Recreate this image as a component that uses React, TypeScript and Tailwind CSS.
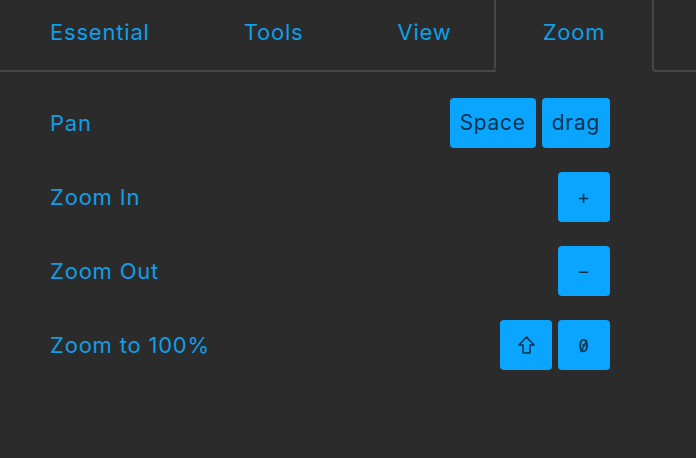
import React from "react";

const Key = ({ children, mono = false }: { children: React.ReactNode; mono?: boolean }) => (
  <div
    className={
      "h-[50px] min-w-[52px] px-[10px] rounded-[4px] bg-[#0aa5ff] text-[#0f3350] flex items-center justify-center " +
      (mono ? "text-[18px] font-['DejaVu_Sans_Mono',monospace]" : "text-[21px] tracking-[0.7px] font-['Inter',sans-serif]")
    }
  >
    {children}
  </div>
);

const ShiftIcon = () => (
  <svg width="19" height="20" viewBox="0 0 19 20" fill="none" stroke="#0f3350" strokeWidth="1.6" strokeLinejoin="round">
    <path d="M9.5 2 L17 10 L13 10 L13 18 L6 18 L6 10 L2 10 Z" />
  </svg>
);

const SlashedZero = () => (
  <span className="relative inline-block">
    0
    <svg className="absolute left-0 top-0 w-full h-full" viewBox="0 0 10 20" preserveAspectRatio="none">
      <line x1="7.6" y1="6" x2="2.4" y2="15" stroke="#0f3350" strokeWidth="1.2" />
    </svg>
  </span>
);

const rows: { label: string; keys: React.ReactNode }[] = [
  {
    label: "Pan",
    keys: (
      <>
        <Key>Space</Key>
        <Key>drag</Key>
      </>
    ),
  },
  { label: "Zoom In", keys: <Key mono>+</Key> },
  { label: "Zoom Out", keys: <Key mono>−</Key> },
  {
    label: "Zoom to 100%",
    keys: (
      <>
        <Key>
          <ShiftIcon />
        </Key>
        <Key mono>
          <SlashedZero />
        </Key>
      </>
    ),
  },
];

export default function App() {
  return (
    <div className="w-[696px] h-[458px] bg-[#2b2b2b] overflow-hidden font-['Inter',sans-serif] text-[#0f9ee8] tracking-[0.8px]">
      <div className="flex h-[72px]">
        <div className="flex border-b-2 border-[#474747]">
          <div className="pl-[50px] pr-[47px] pt-[16px] text-[22px]">Essential</div>
          <div className="px-[47px] pt-[16px] text-[22px]">Tools</div>
          <div className="pl-[47px] pr-[42px] pt-[16px] text-[22px] border-r-2 border-[#474747] rounded-br-[4px]">View</div>
        </div>
        <div className="px-[47px] pt-[16px] text-[22px]">Zoom</div>
        <div className="flex-1 border-b-2 border-l-2 border-[#474747] rounded-bl-[4px]"></div>
      </div>
      <div className="pl-[50px] pr-[86px] pt-[26px] flex flex-col gap-[24px]">
        {rows.map((r) => (
          <div key={r.label} className="flex items-center justify-between">
            <div className="text-[22px]">{r.label}</div>
            <div className="flex gap-[6px]">{r.keys}</div>
          </div>
        ))}
      </div>
    </div>
  );
}
